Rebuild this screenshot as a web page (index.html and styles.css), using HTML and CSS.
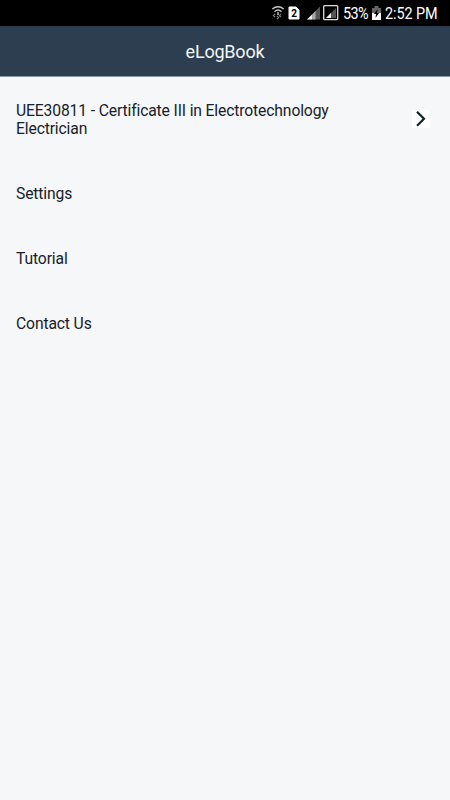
FILE: index.html
```html
<!DOCTYPE html>
<html lang="en">
<head>
<meta charset="utf-8">
<title>eLogBook</title>
<link rel="stylesheet" href="styles.css">
</head>
<body>
<div class="status">
  <svg class="icons" width="70" height="26" viewBox="0 0 70 26">
    <g fill="none" stroke="#c8c8c8" stroke-width="1.4">
      <path d="M2.300 9Q8 4.500 13.700 9M4.500 11.700Q8 8.500 11.500 11.700"/>
      <path d="M8 12v3"/>
      <path d="M5 14l-1.500 1.500L5 17M7 19l1.500-1.500L7 16M11 14l-1.500 1.500L11 17" stroke="#777"/>
    </g>
    <path d="M19 7h7l3 3v9H19z" fill="#fff" stroke="#fff" stroke-linejoin="round"/>
    <text class="sim" x="24" y="16.700" text-anchor="middle">2</text>
    <path d="M50 6.500v13H37z" fill="#555"/>
    <path d="M42.500 14v5.500H37z" fill="#eee"/>
    <path d="M45.500 11v8.500h-2.500V13.500z" fill="#aaa"/>
    <rect x="53.700" y="5.700" width="14" height="14" rx="1" fill="none" stroke="#ddd" stroke-width="1.300"/>
    <path d="M66 8v10H56z" fill="#555"/>
    <path d="M61 13v5h-5z" fill="#eee"/>
  </svg>
  <span class="percent">53%</span>
  <svg class="battery" width="9" height="14" viewBox="0 0 9 14">
    <path d="M0 2h2.500V0h4v2H9v5H0z" fill="#666"/>
    <path d="M0 7h9v7H0z" fill="#fff"/>
    <path d="M5.500 3L2 8h2L3.500 12 7 7H5z" fill="#000"/>
  </svg>
  <span class="clock">2:52 PM</span>
</div>
<header class="header"><h1 class="title">eLogBook</h1></header>
<main class="menu">
  <div class="item course">
    <span class="label">UEE30811 - Certificate III in Electrotechnology Electrician</span>
    <span class="arrow"><svg width="18" height="18" viewBox="0 0 18 18"><path d="M5 1.700L12 8.700 5 15.700" fill="none" stroke="#14242c" stroke-width="2.200"/></svg></span>
  </div>
  <div class="item"><span class="label">Settings</span></div>
  <div class="item"><span class="label">Tutorial</span></div>
  <div class="item"><span class="label">Contact Us</span></div>
</main>
</body>
</html>
```
FILE: styles.css
```css
* { box-sizing: border-box; }
body {
  margin: 0;
  min-height: 800px;
  background: #f5f7f9;
  color: #17212b;
  font-family: Roboto, sans-serif;
}
.status {
  display: flex;
  align-items: center;
  height: 26px;
  padding-left: 270px;
  background: #000;
  color: #fff;
  font-size: 16px;
  line-height: 26px;
  white-space: nowrap;
}
.icons { flex: none; }
.sim { font: bold 10px Roboto, sans-serif; fill: #000; }
.percent,
.clock {
  padding-top: 1px;
  transform: scaleX(0.9);
  transform-origin: left;
}
.percent { width: 26px; margin-left: 3px; letter-spacing: -0.600px; }
.battery { flex: none; margin-left: 3px; }
.clock { margin-left: 4px; letter-spacing: -0.100px; }
.header {
  display: flex;
  align-items: center;
  justify-content: center;
  height: 51px;
  border-bottom: 1px solid #8e98a4;
  background: #2d3e50;
}
.title {
  margin: 2px 0 0;
  color: #f3f7fa;
  font-size: 18px;
  font-weight: 400;
  letter-spacing: -0.200px;
  line-height: 24px;
}
.menu { padding-left: 16px; }
.item {
  display: flex;
  align-items: center;
  height: 65px;
  font-size: 15.700px;
  letter-spacing: -0.140px;
  line-height: 18px;
}
.course { height: 84px; }
.course .label { width: 340px; padding-top: 1px; }
.arrow {
  display: flex;
  width: 18px;
  height: 18px;
  margin-left: 56px;
  background: #fff;
}
```
